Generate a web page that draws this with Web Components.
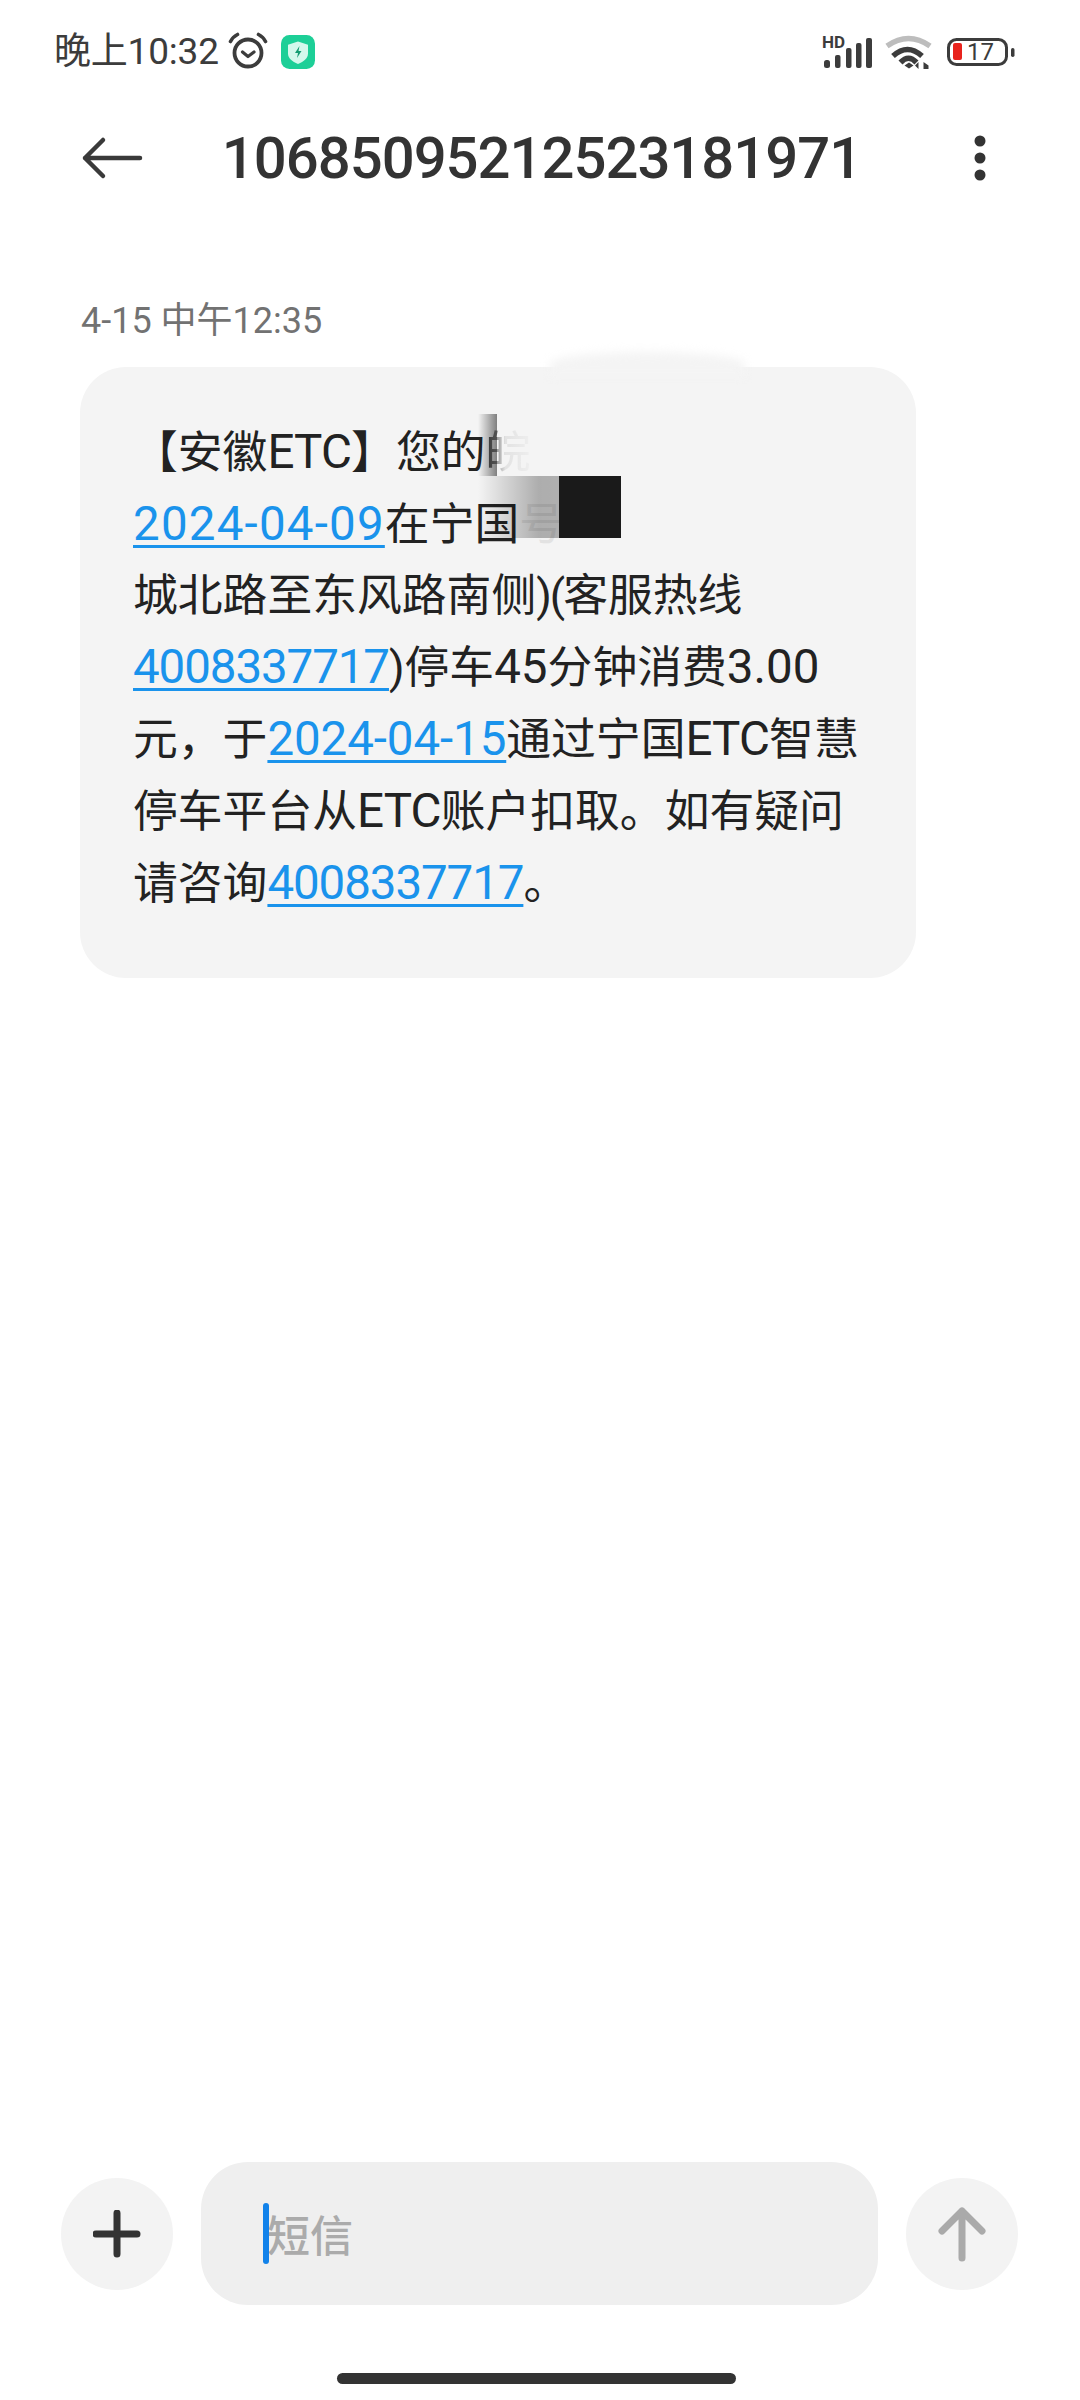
<!DOCTYPE html>
<html lang="zh-CN"><head><meta charset="utf-8">
<style>
html,body{margin:0;padding:0;background:#fff}
body{width:1080px;height:2400px;overflow:hidden;font-family:Roboto,"Noto Sans CJK SC",sans-serif;color:#222}
</style></head><body>
<sms-app>
<status-bar slot="top"></status-bar>
<title-bar slot="top"></title-bar>
<message-stamp>4-15 中午12:35</message-stamp>
<message-bubble></message-bubble>
<composer-bar></composer-bar>
</sms-app>
<script>
function def(name,html){
 customElements.define(name,class extends HTMLElement{
  constructor(){super();this.attachShadow({mode:'open'}).innerHTML=html;}
 });
}
def('sms-app',`<style>:host{display:flex;flex-direction:column;width:1080px;height:2400px}</style><slot name="top"></slot><slot></slot>`);
def('status-bar',`<style>
:host{display:flex;align-items:center;height:104px;box-sizing:border-box;padding:0 65px 0 54px;color:#3c3c3c}
.t{font:400 37px/104px Roboto,"Noto Sans CJK SC",sans-serif;margin-right:8px;letter-spacing:-.2px}
.sp{flex:1}svg{display:block;flex:none}
</style>
<span class="t">晚上10:32</span>
<svg width="42" height="40" viewBox="0 0 42 40" style="margin-right:12px"><g fill="none" stroke="#3c3c3c" stroke-linecap="round"><circle cx="21" cy="21" r="13.500" stroke-width="3.800"/><path d="M15.500 20l5.500 4.500 6-4.500" stroke-width="3.200" stroke-linejoin="round"/><path d="M3.500 9.500C5 6.500 7.500 4 10.500 2.500M38.500 9.500C37 6.500 34.500 4 31.500 2.500" stroke-width="3.600"/></g></svg>
<svg width="34" height="34" viewBox="0 0 34 34"><rect width="34" height="34" rx="8.500" fill="#1dcf97"/><path d="M17 6.500l10 3.200v8.800c0 4.800-4 8-10 10.500-6-2.500-10-5.700-10-10.500V9.700z" fill="#d4f8ec"/><path d="M18.500 11l-4.500 7h3l-1 5 4.500-7h-3z" fill="#159c72"/></svg>
<span class="sp"></span>
<svg width="52" height="40" viewBox="0 0 52 40"><text x="0" y="16" font-family="Roboto,sans-serif" font-weight="700" font-size="17" fill="#3c3c3c">HD</text>
<g fill="#3c3c3c"><rect x="2" y="28" width="6" height="8" rx="2.500"/><rect x="13" y="23" width="5.500" height="13" rx="2"/><rect x="24" y="16" width="5.500" height="20" rx="2"/><rect x="34" y="11" width="5.500" height="25" rx="2"/><rect x="44" y="6" width="6" height="30" rx="2"/></g></svg>
<svg width="48" height="40" viewBox="0 0 48 40" style="margin-left:10px"><g fill="none" stroke-width="5.500"><path d="M3 14Q24.500-1 46 14" stroke="#bdbdbd"/><path d="M9 24Q23.500 11 38 24M16.500 30.500Q24.500 22 32.500 30.500" stroke="#3c3c3c"/></g><path d="M20.500 33.500l4.500-3 4.500 3-4.500 3z" fill="#3c3c3c"/><path d="M34.500 30v7l-3.500-3.500zM39.500 37v-7l5 3.500V37z" fill="#3c3c3c"/></svg>
<svg width="69" height="40" viewBox="0 0 69 40" style="margin-left:14px"><rect x="2.500" y="7.500" width="58" height="25" rx="8" fill="none" stroke="#3c3c3c" stroke-width="3"/><rect x="7" y="11" width="9" height="17" rx="2" fill="#e8231d"/><text x="21" y="28" font-family="Roboto,sans-serif" font-size="24" fill="#3c3c3c">17</text><rect x="65" y="16" width="3.500" height="9" rx="1.700" fill="#3c3c3c"/></svg>`);
def('title-bar',`<style>
:host{display:flex;align-items:center;height:108px;box-sizing:border-box;padding:0 94px 0 81px}
svg{display:block;flex:none}
h1{flex:1;margin:0;text-align:center;font:500 58px/108px Roboto,"Noto Sans CJK SC",sans-serif;letter-spacing:-1px;color:#333;padding-right:34px}
</style>
<svg width="62" height="44" viewBox="0 0 62 44"><path d="M59 22H4M22 4L4 22l18 18" fill="none" stroke="#3a3a3a" stroke-width="4.500" stroke-linecap="round" stroke-linejoin="round"/></svg>
<h1>10685095212523181971</h1>
<svg width="12" height="46" viewBox="0 0 12 46"><g fill="#333"><circle cx="6" cy="6" r="5.500"/><circle cx="6" cy="23" r="5.500"/><circle cx="6" cy="40" r="5.500"/></g></svg>`);
def('message-stamp',`<style>:host{display:block;margin:89px 0 0 81px;font:400 36px/40px Roboto,"Noto Sans CJK SC",sans-serif;color:#727272}</style><slot></slot>`);
def('message-bubble',`<style>
:host{display:block;position:relative;box-sizing:border-box;margin:26px 0 0 80px;width:836px;height:611px;padding:49px 40px 0 53px;background:#f4f4f4;border-radius:46px;
font:400 44.8px/72px Roboto,"Noto Sans CJK SC",sans-serif;color:#222;white-space:nowrap}
.l{height:71.8px}
a,b{font-weight:400;font-size:47.500px}
a{color:#1a93ec;text-decoration:underline;text-decoration-thickness:3px;text-underline-offset:5px}
.d{letter-spacing:1.200px}.d2{letter-spacing:-.1px}.n{letter-spacing:-1.100px}
b.e{letter-spacing:-.8px}
.fade{background:linear-gradient(90deg,#333,#e2e2e2 45%,#eeeeee);-webkit-background-clip:text;background-clip:text;color:transparent}
.fade2{color:#e2e2e2}
.p{letter-spacing:-2px}
.cover{position:absolute}
.halo{left:470px;top:-15px;width:195px;height:24px;background:#f4f4f4;border-radius:50% 50% 0 0;filter:blur(5px)}
.f{left:398px;top:47px;width:19px;height:62px;background:linear-gradient(90deg,#0000,#0000007a)}
.g{left:398px;top:109px;width:81px;height:62px;background:linear-gradient(90deg,#0000,#0000004a 75%,#00000048)}
.k{left:479px;top:109px;width:62px;height:62px;background:#1a1a1a}
</style>
<div class="cover halo"></div>
<div class="l">【安徽<b class="e">ETC</b>】您的<span class="fade">皖</span></div>
<div class="l"><a class="d">2024-04-09</a>在宁国<span class="fade2">号</span></div>
<div class="l">城北路至东风路南侧<span class="p">)(</span>客服热线</div>
<div class="l"><a class="n">4008337717</a>)停车<b>45</b>分钟消费<b>3.00</b></div>
<div class="l">元，于<a class="d2">2024-04-15</a>通过宁国<b class="e">ETC</b>智慧</div>
<div class="l">停车平台从<b class="e">ETC</b>账户扣取。如有疑问</div>
<div class="l">请咨询<a class="n">4008337717</a>。</div>
<div class="cover f"></div><div class="cover g"></div><div class="cover k"></div>`);
def('composer-bar',`<style>
:host{display:flex;align-items:center;box-sizing:border-box;position:relative;margin-top:auto;height:143px;margin-bottom:95px;padding:0 62px 0 61px;gap:28px}
.c{width:112px;height:112px;border-radius:50%;background:#f3f3f3;display:flex;align-items:center;justify-content:center;flex:none}
.i{flex:1;height:143px;border-radius:47px;background:#efefef;display:flex;align-items:center;padding-left:62px;font:500 43px/1 "Noto Sans CJK SC",sans-serif;color:#ababab;position:relative;box-sizing:border-box}
.caret{position:absolute;left:62px;top:41px;width:6px;height:61px;border-radius:3px;background:#1282ea}
.txt{margin-left:4px}
.home{position:absolute;left:337px;top:211px;width:399px;height:11px;border-radius:6px;background:#333}
</style>
<div class="c"><svg width="48" height="48" viewBox="0 0 48 48"><path d="M24 3v41M3 24h41" stroke="#333" stroke-width="7" stroke-linecap="round"/></svg></div>
<div class="i"><span class="txt">短信</span><span class="caret"></span></div>
<div class="c"><svg width="48" height="56" viewBox="0 0 48 56"><path d="M24 52V5M4 25L24 5l20 20" fill="none" stroke="#aaa" stroke-width="7" stroke-linecap="round" stroke-linejoin="round"/></svg></div>
<div class="home"></div>`);
</script>
</body></html>
